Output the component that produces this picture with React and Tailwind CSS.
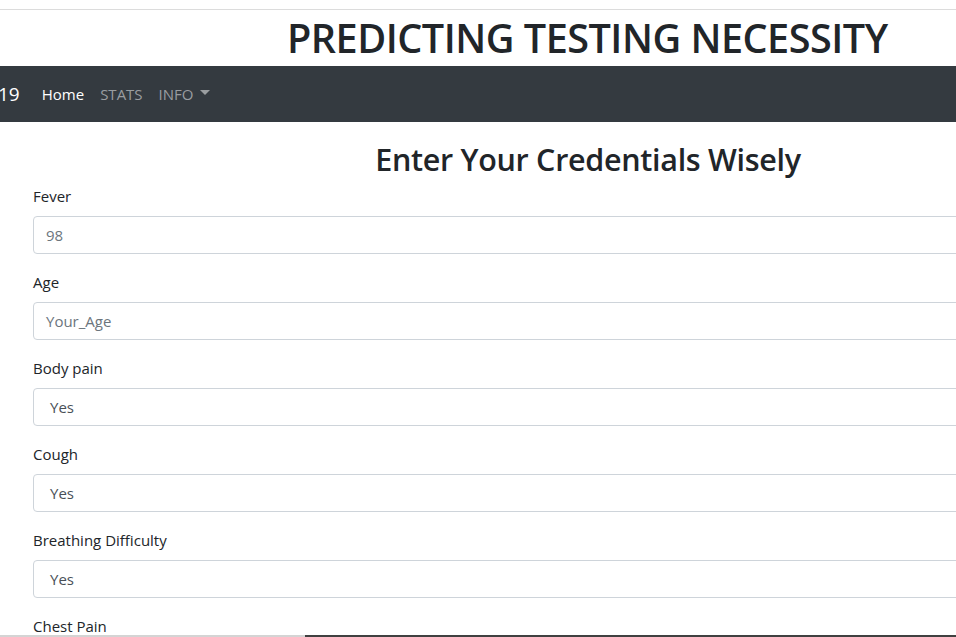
import React from "react";

const font = { fontFamily: '"Open Sans", "Noto Sans", sans-serif' };

function Field({ label, value, placeholder, select }) {
  return (
    <div className="mb-4">
      <label className="block mb-2 text-[15px] leading-6 text-[#212529]">{label}</label>
      <div className="w-[1100px] h-[38px] border border-[#ced4da] rounded-[4px] bg-white flex items-center">
        {select ? (
          <span className="pl-4 pt-px text-[15px] text-[#495057]">{value}</span>
        ) : (
          <span className="pl-3 pt-px text-[15px] text-[#6c757d]">{placeholder}</span>
        )}
      </div>
    </div>
  );
}

export default function App() {
  return (
    <div className="w-[956px] h-[637px] overflow-hidden bg-white relative" style={font}>
      <div className="h-[9px]" />
      <div className="h-px bg-[#dcdcdc]" />
      <div className="h-[56px] flex items-center">
        <h1 className="ml-[287px] whitespace-nowrap text-[39.6px] font-semibold text-[#212529] leading-none tracking-[-0.5px] pt-[2px]">
          PREDICTING TESTING NECESSITY
        </h1>
      </div>
      <nav className="h-[56px] bg-[#343a40] flex items-center">
        <span className="text-[19px] text-white -ml-[2px] mr-[22px]">19</span>
        <span className="text-[15px] text-white mr-4">Home</span>
        <span className="text-[15px] text-[#9a9da0] mr-4">STATS</span>
        <span className="text-[15px] text-[#9a9da0] flex items-center">
          INFO
          <svg width="10" height="6" viewBox="0 0 10 6" className="ml-[6px] mb-[2px]">
            <path d="M0 0 L10 0 L5 5 Z" fill="#9a9da0" />
          </svg>
        </span>
      </nav>
      <div className="h-[18px]" />
      <h2 className="text-center w-[1176px] text-[30.5px] leading-[38px] font-semibold text-[#212529] tracking-[-0.3px]">
        Enter Your Credentials Wisely
      </h2>
      <div className="pl-[33px] pt-[6px]">
        <Field label="Fever" placeholder="98" />
        <Field label="Age" placeholder="Your_Age" />
        <Field label="Body pain" value="Yes" select />
        <Field label="Cough" value="Yes" select />
        <Field label="Breathing Difficulty" value="Yes" select />
        <Field label="Chest Pain" value="Yes" select />
      </div>
      <div className="absolute left-0 right-0 bottom-0 h-[2px] flex">
        <div className="w-[305px] bg-[#d4d4d4]" />
        <div className="flex-1 bg-[#404040]" />
      </div>
    </div>
  );
}
